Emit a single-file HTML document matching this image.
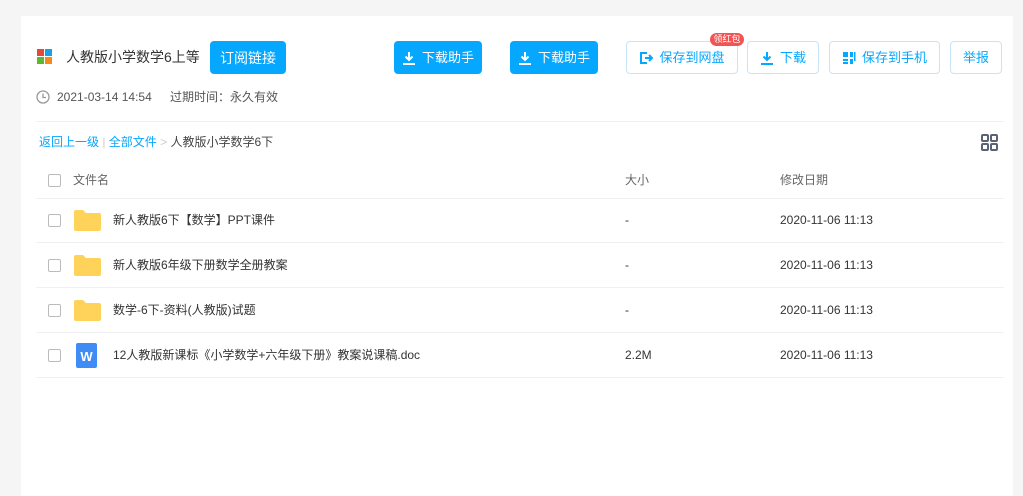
<!DOCTYPE html>
<html><head><meta charset="utf-8"><style>
*{margin:0;padding:0;box-sizing:border-box}
body{width:1023px;height:496px;background:#f5f5f6;font-family:"Liberation Sans","Noto Sans CJK SC",sans-serif;position:relative;overflow:hidden;color:#333}
.panel{position:absolute;left:21px;top:16px;width:992px;height:480px;background:#fff}
.abs{position:absolute}
.btn{position:absolute;top:41px;height:33px;border-radius:4px;font-size:13px;display:flex;align-items:center;justify-content:center;gap:6px;line-height:16px}
.pri{background:#06a7ff;color:#fff}
.sec{border:1px solid #c8e4f7;color:#06a7ff;background:#fff}
.cb{position:absolute;left:48px;width:13px;height:13px;border:1px solid #bbb;border-radius:2px;background:#fff}
.line{position:absolute;left:36px;width:968px;height:1px;background:#eef0f3}
.t{position:absolute;font-size:12px;color:#333;white-space:nowrap;line-height:16px}
.folder{position:absolute;left:74px;width:27px;height:21px}
</style></head><body>
<div class="panel"></div>
<div class="abs" style="left:37px;top:49px;width:7px;height:7px;background:#e04a3b"></div>
<div class="abs" style="left:45px;top:49px;width:7px;height:7px;background:#1ba1e2"></div>
<div class="abs" style="left:37px;top:57px;width:7px;height:7px;background:#5cb82f"></div>
<div class="abs" style="left:45px;top:57px;width:7px;height:7px;background:#f7891c"></div>
<div class="t" style="left:66px;top:49px;font-size:14px">人教版小学数学6上等</div>
<div class="btn pri" style="left:210px;width:76px;font-size:14px">订阅链接</div>
<div class="btn pri" style="left:394px;width:88px;font-size:13px"><svg width="14" height="14" viewBox="0 0 14 14" fill="none" stroke="#fff" stroke-width="2"><path d="M7 1v8M3.5 5.5L7 9l3.5-3.5M1 13h12"/></svg>下载助手</div>
<div class="btn pri" style="left:510px;width:88px;font-size:13px"><svg width="14" height="14" viewBox="0 0 14 14" fill="none" stroke="#fff" stroke-width="2"><path d="M7 1v8M3.5 5.5L7 9l3.5-3.5M1 13h12"/></svg>下载助手</div>
<div class="btn sec" style="left:626px;width:112px"><svg width="14" height="14" viewBox="0 0 14 14" fill="none" stroke="#06a7ff" stroke-width="2"><path d="M8 2H2v10h6M6 7h7M10 4l3 3-3 3"/></svg>保存到网盘</div>
<div class="abs" style="left:710px;top:33px;width:34px;height:13px;background:#f25454;border-radius:7px;color:#fff;font-size:9px;text-align:center;line-height:13px">领红包</div>
<div class="btn sec" style="left:747px;width:72px"><svg width="14" height="14" viewBox="0 0 14 14" fill="none" stroke="#06a7ff" stroke-width="2"><path d="M7 1v8M3.5 5.5L7 9l3.5-3.5M1 13h12"/></svg>下载</div>
<div class="btn sec" style="left:829px;width:111px"><svg width="14" height="14" viewBox="0 0 14 14" fill="#06a7ff"><rect x="1" y="1" width="5" height="5"/><rect x="8" y="1" width="3" height="5"/><rect x="1" y="8" width="5" height="2"/><rect x="8" y="8" width="3" height="5"/><rect x="1" y="11" width="5" height="2"/><rect x="12" y="1" width="1.5" height="9"/></svg>保存到手机</div>
<div class="btn sec" style="left:950px;width:52px">举报</div>
<svg class="abs" style="left:36px;top:90px" width="14" height="14" viewBox="0 0 14 14" fill="none" stroke="#999" stroke-width="1.3"><circle cx="7" cy="7" r="6"/><path d="M7 3.5V7.5h3"/></svg>
<div class="t" style="left:57px;top:89px;color:#555">2021-03-14 14:54</div>
<div class="t" style="left:170px;top:89px;color:#555">过期时间：永久有效</div>
<div class="line" style="top:121px"></div>
<div class="t" style="left:39px;top:134px;color:#06a7ff">返回上一级 <span style="color:#ccc">|</span> 全部文件 <span style="color:#ccc">&gt;</span> <span style="color:#444">人教版小学数学6下</span></div>
<svg class="abs" style="left:981px;top:134px" width="17" height="17" viewBox="0 0 17 17" fill="none" stroke="#5a6275" stroke-width="2"><rect x="1" y="1" width="6" height="6" rx="1"/><rect x="10" y="1" width="6" height="6" rx="1"/><rect x="1" y="10" width="6" height="6" rx="1"/><rect x="10" y="10" width="6" height="6" rx="1"/></svg>
<div class="cb" style="top:174px"></div>
<div class="t" style="left:73px;top:172px;color:#666">文件名</div>
<div class="t" style="left:625px;top:172px;color:#666">大小</div>
<div class="t" style="left:780px;top:172px;color:#666">修改日期</div>
<div class="line" style="top:198px"></div>
<div class="cb" style="top:214px"></div>
<svg class="folder" style="top:210px" viewBox="0 0 27 21"><path d="M0 2a2 2 0 0 1 2-2h7l3 3h13a2 2 0 0 1 2 2v14a2 2 0 0 1-2 2H2a2 2 0 0 1-2-2z" fill="#ffd359"/></svg>
<div class="t" style="left:113px;top:212px">新人教版6下【数学】PPT课件</div>
<div class="t" style="left:625px;top:212px">-</div>
<div class="t" style="left:780px;top:212px">2020-11-06 11:13</div>
<div class="line" style="top:242px"></div>
<div class="cb" style="top:259px"></div>
<svg class="folder" style="top:255px" viewBox="0 0 27 21"><path d="M0 2a2 2 0 0 1 2-2h7l3 3h13a2 2 0 0 1 2 2v14a2 2 0 0 1-2 2H2a2 2 0 0 1-2-2z" fill="#ffd359"/></svg>
<div class="t" style="left:113px;top:257px">新人教版6年级下册数学全册教案</div>
<div class="t" style="left:625px;top:257px">-</div>
<div class="t" style="left:780px;top:257px">2020-11-06 11:13</div>
<div class="line" style="top:287px"></div>
<div class="cb" style="top:304px"></div>
<svg class="folder" style="top:300px" viewBox="0 0 27 21"><path d="M0 2a2 2 0 0 1 2-2h7l3 3h13a2 2 0 0 1 2 2v14a2 2 0 0 1-2 2H2a2 2 0 0 1-2-2z" fill="#ffd359"/></svg>
<div class="t" style="left:113px;top:302px">数学-6下-资料(人教版)试题</div>
<div class="t" style="left:625px;top:302px">-</div>
<div class="t" style="left:780px;top:302px">2020-11-06 11:13</div>
<div class="line" style="top:332px"></div>
<div class="cb" style="top:349px"></div>
<div class="abs" style="left:76px;top:343px;width:21px;height:25px;background:#3f8cf5;border-radius:2px;color:#fff;font-size:13px;font-weight:bold;text-align:center;line-height:27px">W</div>
<div class="t" style="left:113px;top:347px">12人教版新课标《小学数学+六年级下册》教案说课稿.doc</div>
<div class="t" style="left:625px;top:347px">2.2M</div>
<div class="t" style="left:780px;top:347px">2020-11-06 11:13</div>
<div class="line" style="top:377px"></div>
</body></html>
